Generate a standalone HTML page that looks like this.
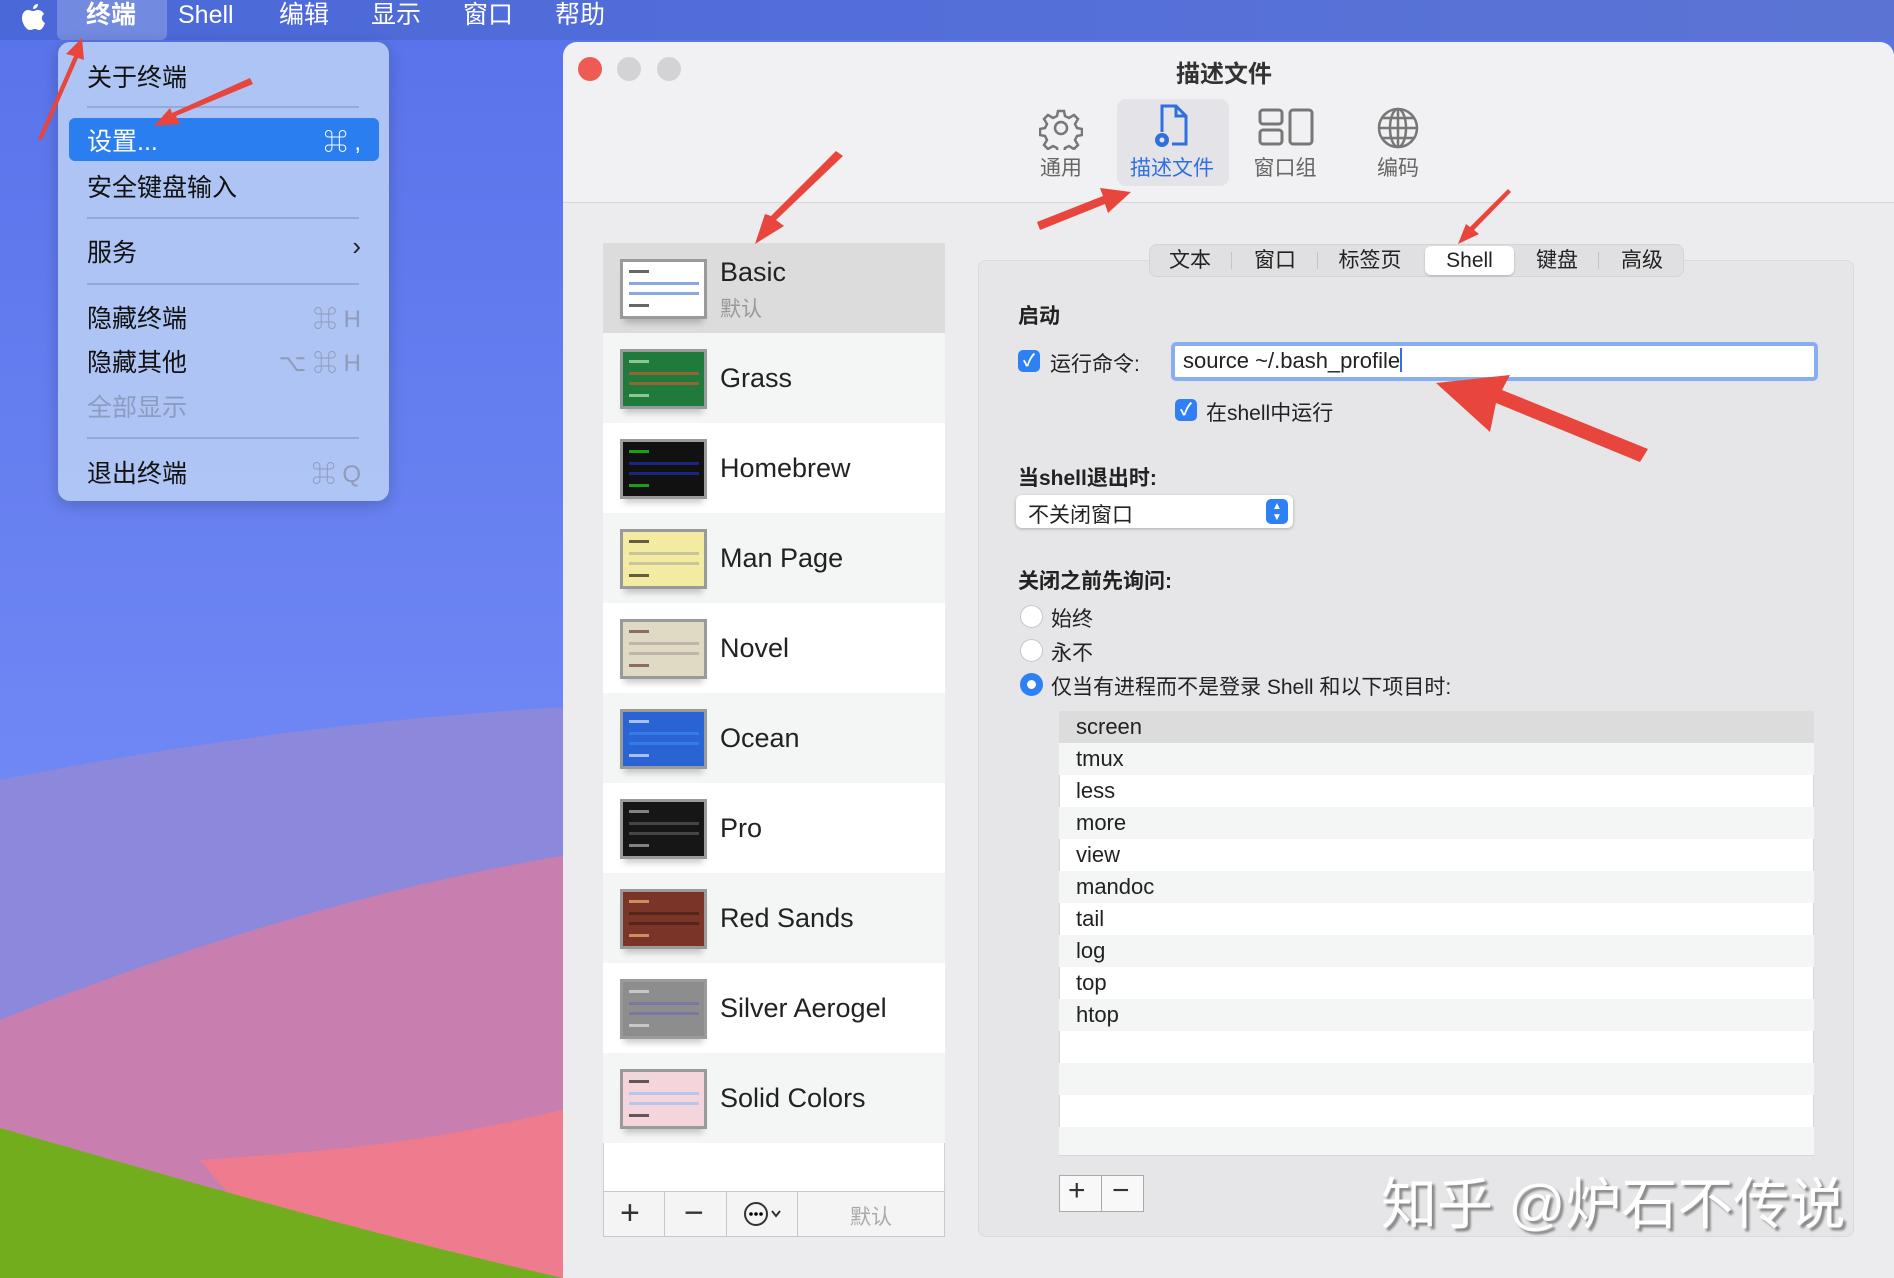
<!DOCTYPE html>
<html style="width:1894px;height:1278px;overflow:hidden"><head><meta charset="utf-8">
<style>
*{margin:0;padding:0;box-sizing:border-box}
body{width:1894px;height:1278px;overflow:hidden;position:relative;font-family:"Liberation Sans","Noto Sans CJK SC",sans-serif;color:#222}
.a{position:absolute}
.mb{left:0;top:0;width:1894px;height:40px;background:linear-gradient(90deg,#4a68d8,#5570d8 60%,#5b74d4)}
.mbt{top:0;line-height:30px;font-size:25px;color:#fff;font-weight:bold}
.menu{left:58px;top:42px;width:331px;height:459px;background:rgba(178,200,244,0.95);border-radius:12px;box-shadow:0 4px 16px rgba(0,0,0,.2)}
.mi{left:29px;font-size:25px;color:#111}
.sc{right:28px;font-size:24px;color:#8f9bb8}
.sep{left:29px;width:272px;height:2px;background:#93a9d6}
.win{left:563px;top:42px;width:1331px;height:1236px;background:#f1f1f3;border-radius:14px 14px 0 0}
.tl{width:24px;height:24px;border-radius:50%;top:57px}
.tb{font-size:21px;color:#666;text-align:center;width:112px}
.row{left:603px;width:342px;height:90px}
.th{left:17px;top:16px;width:87px;height:60px;border:3px solid #9a9a9a;box-shadow:0 8px 6px -4px rgba(0,0,0,.2)}
.th i{position:absolute;left:6px;height:3px;background:currentColor;opacity:.6}
.nm{left:117px;font-size:27px;color:#222}
.seg{font-size:21px;color:#222;top:0;line-height:33px;text-align:center}
.lr{left:1059px;width:755px;height:32px;font-size:22px;line-height:32px;padding-left:17px}
.cb{width:22px;height:22px;border-radius:5px;background:#2f7ff5;color:#fff;font-size:17px;line-height:22px;text-align:center;font-weight:bold}
.rd{width:23px;height:23px;border-radius:50%;background:#fff;border:1px solid #c8c8c8;left:1020px}
.lab{font-size:21px;color:#222}
.bold{font-size:21px;font-weight:bold;color:#222}
</style></head><body>
<svg class="a" style="left:0;top:0" width="1894" height="1278">
<defs><linearGradient id="g1" x1="0" y1="0" x2="0" y2="1"><stop offset="0" stop-color="#5873ea"/><stop offset="1" stop-color="#7f95fb"/></linearGradient></defs>
<rect width="1894" height="1278" fill="url(#g1)"/>
<path d="M0 780 C200 740 400 715 600 705 L600 1278 L0 1278Z" fill="#8c88dc"/>
<path d="M0 1020 C200 940 400 880 600 850 L600 1278 L0 1278Z" fill="#c87fb0"/>
<path d="M200 1160 C350 1150 450 1140 600 1100 L600 1278 L300 1278Z" fill="#ee7c8e"/>
<path d="M0 1128 C150 1170 350 1230 563 1278 L0 1278Z" fill="#72ad1e"/>
</svg>
<div class="a mb"></div>
<svg class="a" style="left:20px;top:2px" width="26" height="30" viewBox="0 0 26 30"><path d="M18 2c0 3-2 5-5 5 0-3 2-5 5-5zM13 9c2 0 3-1 5-1 3 0 5 2 6 4-3 2-3 7 1 9-1 3-3 7-6 7-2 0-2-1-4-1s-3 1-5 1C6 28 2 21 2 16c0-5 3-8 6-8 2 0 3 1 5 1z" fill="#fff"/></svg>
<div class="a" style="left:57px;top:0;width:110px;height:40px;background:rgba(255,255,255,.22);border-radius:0 0 6px 6px"></div>
<div class="a mbt" style="left:86px">终端</div>
<div class="a mbt" style="left:178px;font-weight:normal">Shell</div>
<div class="a mbt" style="left:279px;font-weight:normal">编辑</div>
<div class="a mbt" style="left:371px;font-weight:normal">显示</div>
<div class="a mbt" style="left:463px;font-weight:normal">窗口</div>
<div class="a mbt" style="left:555px;font-weight:normal">帮助</div>

<div class="a menu">
<div class="a mi" style="top:16px">关于终端</div>
<div class="a sep" style="top:64px"></div>
<div class="a" style="left:11px;top:76px;width:310px;height:43px;background:#2b7ef0;border-radius:6px"></div>
<div class="a mi" style="top:80px;color:#fff">设置...</div>
<div class="a sc" style="top:80px;color:#fff">⌘ ,</div>
<div class="a mi" style="top:126px">安全键盘输入</div>
<div class="a sep" style="top:175px"></div>
<div class="a mi" style="top:191px">服务</div>
<div class="a sc" style="top:189px;color:#222;font-size:26px">›</div>
<div class="a sep" style="top:241px"></div>
<div class="a mi" style="top:257px">隐藏终端</div>
<div class="a sc" style="top:257px">⌘ H</div>
<div class="a mi" style="top:301px">隐藏其他</div>
<div class="a sc" style="top:301px">⌥ ⌘ H</div>
<div class="a mi" style="top:346px;color:#8c9cc0">全部显示</div>
<div class="a sep" style="top:395px"></div>
<div class="a mi" style="top:412px">退出终端</div>
<div class="a sc" style="top:412px">⌘ Q</div>
</div>

<div class="a win"></div>
<div class="a tl" style="left:578px;background:#ee5b52"></div>
<div class="a tl" style="left:617px;background:#d3d3d5"></div>
<div class="a tl" style="left:657px;background:#d3d3d5"></div>
<div class="a" style="left:1176px;top:54px;font-size:24px;font-weight:bold;color:#333">描述文件</div>
<div class="a" style="left:1117px;top:99px;width:112px;height:87px;background:#e4e4e8;border-radius:9px"></div>
<svg class="a" style="left:1039px;top:106px" width="44" height="44" viewBox="0 0 44 44"><g fill="none" stroke="#777" stroke-width="2.5"><circle cx="22" cy="22" r="6"/><path d="M19 5h6l1 5 4 2 5-3 4 4-3 5 2 4 5 1v6l-5 1-2 4 3 5-4 4-5-3-4 2-1 5h-6l-1-5-4-2-5 3-4-4 3-5-2-4-5-1v-6l5-1 2-4-3-5 4-4 5 3 4-2z"/></g></svg>
<svg class="a" style="left:1150px;top:102px" width="44" height="50" viewBox="0 0 44 50"><g fill="none" stroke="#2f6fe0" stroke-width="3"><path d="M12 30V4h14l10 10v28H22"/><path d="M26 4v10h10"/></g><circle cx="12" cy="38" r="7" fill="#2f6fe0"/><circle cx="12" cy="38" r="2.5" fill="#e4e4e8"/></svg>
<svg class="a" style="left:1258px;top:108px" width="56" height="40" viewBox="0 0 56 40"><g fill="none" stroke="#777" stroke-width="3"><rect x="2" y="2" width="22" height="14" rx="3"/><rect x="2" y="22" width="22" height="14" rx="3"/><rect x="32" y="2" width="22" height="34" rx="3"/></g></svg>
<svg class="a" style="left:1376px;top:106px" width="44" height="44" viewBox="0 0 44 44"><g fill="none" stroke="#777" stroke-width="2.5"><circle cx="22" cy="22" r="19"/><ellipse cx="22" cy="22" rx="8" ry="19"/><path d="M3 22h38M6 12h32M6 32h32M22 3v38"/></g></svg>
<div class="a tb" style="left:1005px;top:152px">通用</div>
<div class="a tb" style="left:1116px;top:152px;color:#2f6fe0">描述文件</div>
<div class="a tb" style="left:1229px;top:152px">窗口组</div>
<div class="a tb" style="left:1342px;top:152px">编码</div>
<div class="a" style="left:563px;top:202px;width:1331px;height:1px;background:#d6d6d8"></div>
<div class="a" style="left:563px;top:203px;width:1331px;height:1075px;background:#ececee"></div>

<div class="a" style="left:603px;top:243px;width:342px;height:994px;background:#fff;border:1px solid #d0d0d0"></div>
<div class="a row" style="top:243px;background:#dcdcdc"><div class="a th" style="background:#fff;color:#3a6fd0"><i style="top:8px;width:20px;color:#000"></i><i style="top:20px;width:70px"></i><i style="top:30px;width:70px"></i><i style="top:42px;width:20px;color:#000"></i></div><div class="a nm" style="top:14px">Basic</div><div class="a nm" style="top:50px;font-size:21px;color:#999">默认</div></div>
<div class="a row" style="top:333px;background:#f4f5f5"><div class="a th" style="background:#1f7a3c;color:#e0572d"><i style="top:8px;width:20px;color:#cfc"></i><i style="top:20px;width:70px"></i><i style="top:30px;width:70px"></i><i style="top:42px;width:20px;color:#cfc"></i></div><div class="a nm" style="top:30px">Grass</div></div>
<div class="a row" style="top:423px;background:#fff"><div class="a th" style="background:#111;color:#2233cc"><i style="top:8px;width:20px;color:#2f2"></i><i style="top:20px;width:70px"></i><i style="top:30px;width:70px"></i><i style="top:42px;width:20px;color:#2f2"></i></div><div class="a nm" style="top:30px">Homebrew</div></div>
<div class="a row" style="top:513px;background:#f4f5f5"><div class="a th" style="background:#f4eba2;color:#aa9"><i style="top:8px;width:20px;color:#000"></i><i style="top:20px;width:70px"></i><i style="top:30px;width:70px"></i><i style="top:42px;width:20px;color:#000"></i></div><div class="a nm" style="top:30px">Man Page</div></div>
<div class="a row" style="top:603px;background:#fff"><div class="a th" style="background:#dfdac4;color:#a99"><i style="top:8px;width:20px;color:#522"></i><i style="top:20px;width:70px"></i><i style="top:30px;width:70px"></i><i style="top:42px;width:20px;color:#522"></i></div><div class="a nm" style="top:30px">Novel</div></div>
<div class="a row" style="top:693px;background:#f4f5f5"><div class="a th" style="background:#2a63d3;color:#3b8df5"><i style="top:8px;width:20px;color:#fff"></i><i style="top:20px;width:70px"></i><i style="top:30px;width:70px"></i><i style="top:42px;width:20px;color:#fff"></i></div><div class="a nm" style="top:30px">Ocean</div></div>
<div class="a row" style="top:783px;background:#fff"><div class="a th" style="background:#161616;color:#666"><i style="top:8px;width:20px;color:#ccc"></i><i style="top:20px;width:70px"></i><i style="top:30px;width:70px"></i><i style="top:42px;width:20px;color:#ccc"></i></div><div class="a nm" style="top:30px">Pro</div></div>
<div class="a row" style="top:873px;background:#f4f5f5"><div class="a th" style="background:#7b3528;color:#3b1a14"><i style="top:8px;width:20px;color:#fc8"></i><i style="top:20px;width:70px"></i><i style="top:30px;width:70px"></i><i style="top:42px;width:20px;color:#fc8"></i></div><div class="a nm" style="top:30px">Red Sands</div></div>
<div class="a row" style="top:963px;background:#fff"><div class="a th" style="background:#8d8d8d;color:#6a6ab0"><i style="top:8px;width:20px;color:#eee"></i><i style="top:20px;width:70px"></i><i style="top:30px;width:70px"></i><i style="top:42px;width:20px;color:#eee"></i></div><div class="a nm" style="top:30px">Silver Aerogel</div></div>
<div class="a row" style="top:1053px;background:#f4f5f5"><div class="a th" style="background:#f5d5dc;color:#8bc0f5"><i style="top:8px;width:20px;color:#000"></i><i style="top:20px;width:70px"></i><i style="top:30px;width:70px"></i><i style="top:42px;width:20px;color:#000"></i></div><div class="a nm" style="top:30px">Solid Colors</div></div>
<div class="a" style="left:603px;top:1191px;width:342px;height:46px;background:#f4f4f5;border:1px solid #c8c8c8"></div>
<div class="a" style="left:664px;top:1191px;width:1px;height:46px;background:#c8c8c8"></div>
<div class="a" style="left:726px;top:1191px;width:1px;height:46px;background:#c8c8c8"></div>
<div class="a" style="left:797px;top:1191px;width:1px;height:46px;background:#c8c8c8"></div>
<div class="a" style="left:620px;top:1194px;font-size:34px;color:#333">+</div>
<div class="a" style="left:684px;top:1194px;font-size:34px;color:#333">−</div>
<svg class="a" style="left:742px;top:1200px" width="44" height="28"><circle cx="14" cy="14" r="11" fill="none" stroke="#333" stroke-width="2"/><circle cx="9" cy="14" r="1.8"/><circle cx="14" cy="14" r="1.8"/><circle cx="19" cy="14" r="1.8"/><path d="M30 11l4 5 4-5" fill="none" stroke="#333" stroke-width="2"/></svg>
<div class="a" style="left:850px;top:1201px;font-size:21px;color:#aaa">默认</div>

<div class="a" style="left:978px;top:260px;width:876px;height:977px;background:#e6e6e8;border:1px solid #dadadc;border-radius:8px"></div>
<div class="a" style="left:1149px;top:244px;width:535px;height:33px;background:#e0e0e2;border:1px solid #d4d4d6;border-radius:8px"></div>
<div class="a" style="left:1425px;top:246px;width:89px;height:29px;background:#fff;border-radius:6px;box-shadow:0 1px 2px rgba(0,0,0,.2)"></div>
<div class="a seg" style="left:1160px;top:244px;width:60px">文本</div>
<div class="a seg" style="left:1244px;top:244px;width:62px">窗口</div>
<div class="a seg" style="left:1330px;top:244px;width:80px">标签页</div>
<div class="a seg" style="left:1425px;top:244px;width:89px">Shell</div>
<div class="a seg" style="left:1527px;top:244px;width:60px">键盘</div>
<div class="a seg" style="left:1612px;top:244px;width:60px">高级</div>
<div class="a" style="left:1231px;top:252px;width:1px;height:17px;background:#c4c4c6"></div>
<div class="a" style="left:1317px;top:252px;width:1px;height:17px;background:#c4c4c6"></div>
<div class="a" style="left:1598px;top:252px;width:1px;height:17px;background:#c4c4c6"></div>

<div class="a bold" style="left:1018px;top:300px">启动</div>
<div class="a cb" style="left:1018px;top:350px">✓</div>
<div class="a lab" style="left:1050px;top:348px">运行命令:</div>
<div class="a" style="left:1171px;top:342px;width:647px;height:39px;border:4px solid #87aef0;border-radius:5px;background:#fff"></div>
<div class="a" style="left:1183px;top:348px;font-size:22px;color:#222">source ~/.bash_profile<span style="display:inline-block;width:2px;height:24px;background:#2f6fe0;vertical-align:-4px"></span></div>
<div class="a cb" style="left:1175px;top:399px">✓</div>
<div class="a lab" style="left:1206px;top:397px">在shell中运行</div>
<div class="a bold" style="left:1018px;top:462px">当shell退出时:</div>
<div class="a" style="left:1016px;top:495px;width:277px;height:33px;background:#fff;border-radius:6px;box-shadow:0 1px 3px rgba(0,0,0,.25)"></div>
<div class="a lab" style="left:1028px;top:499px">不关闭窗口</div>
<div class="a" style="left:1266px;top:499px;width:22px;height:25px;background:#2f7ff5;border-radius:5px;color:#fff;font-size:10px;line-height:11px;text-align:center;padding-top:2px">▲<br>▼</div>
<div class="a bold" style="left:1018px;top:565px">关闭之前先询问:</div>
<div class="a rd" style="top:605px"></div>
<div class="a lab" style="left:1051px;top:603px">始终</div>
<div class="a rd" style="top:639px"></div>
<div class="a lab" style="left:1051px;top:637px">永不</div>
<div class="a rd" style="top:673px;border:7px solid #2f7ff5"></div>
<div class="a lab" style="left:1051px;top:671px">仅当有进程而不是登录 Shell 和以下项目时:</div>

<div class="a" style="left:1059px;top:711px;width:755px;height:445px;background:#fff;border:1px solid #d6d6d8"></div>
<div class="a lr" style="top:711px;background:#dcdcdc">screen</div>
<div class="a lr" style="top:743px;background:#f4f5f5">tmux</div>
<div class="a lr" style="top:775px">less</div>
<div class="a lr" style="top:807px;background:#f4f5f5">more</div>
<div class="a lr" style="top:839px">view</div>
<div class="a lr" style="top:871px;background:#f4f5f5">mandoc</div>
<div class="a lr" style="top:903px">tail</div>
<div class="a lr" style="top:935px;background:#f4f5f5">log</div>
<div class="a lr" style="top:967px">top</div>
<div class="a lr" style="top:999px;background:#f4f5f5">htop</div>
<div class="a lr" style="top:1031px"></div>
<div class="a lr" style="top:1063px;background:#f4f5f5"></div>
<div class="a lr" style="top:1095px"></div>
<div class="a lr" style="top:1127px;height:28px;background:#f4f5f5"></div>
<div class="a" style="left:1059px;top:1175px;width:85px;height:37px;background:#f8f8f8;border:1px solid #aaa"></div>
<div class="a" style="left:1101px;top:1175px;width:1px;height:37px;background:#aaa"></div>
<div class="a" style="left:1068px;top:1174px;font-size:30px;color:#333">+</div>
<div class="a" style="left:1112px;top:1174px;font-size:30px;color:#333">−</div>
<div class="a" style="left:1381px;top:1160px;font-size:56px;color:#fff;text-shadow:3px 3px 2px #888;white-space:nowrap">知乎 @炉石不传说</div>

<svg class="a" style="left:0;top:0" width="1894" height="1278">
<g fill="#e8453c">
<path d="M38 139L74 56 66 54 82 38 84 60 78 58 42 140Z"/>
<path d="M250 78L253 84 176 116 180 124 154 126 170 108 172 113Z"/>
<path d="M836 151L843 156 776 220 784 226 755 244 765 214 771 216Z"/>
<path d="M1037 222L1040 230 1105 204 1108 213 1131 192 1100 188 1103 196Z"/>
<path d="M1508 189L1511 192 1474 230 1479 234 1458 244 1466 224 1470 227Z"/>
<path d="M1648 449L1640 462 1496 403 1490 432 1436 383 1510 375 1502 390Z"/>
</g></svg>
</body></html>
